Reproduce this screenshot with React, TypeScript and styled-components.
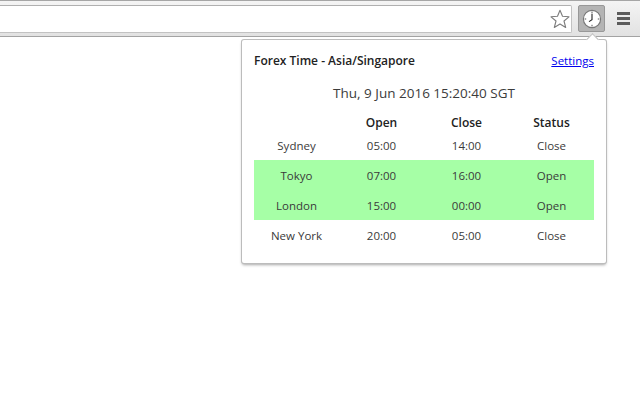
import React from 'react';
import styled, { createGlobalStyle } from 'styled-components';

const rows = [
    { city: 'Sydney', open: '05:00', close: '14:00', status: 'Close' },
    { city: 'Tokyo', open: '07:00', close: '16:00', status: 'Open' },
    { city: 'London', open: '15:00', close: '00:00', status: 'Open' },
    { city: 'New York', open: '20:00', close: '05:00', status: 'Close' },
];

const App = () => {
    return (
        <Page>
            <Global />
            <Toolbar>
                <Omnibox>
                    <StarIcon />
                </Omnibox>
                <ExtButton>
                    <ClockIcon />
                </ExtButton>
                <Menu>
                    <MenuBar />
                    <MenuBar />
                    <MenuBar />
                </Menu>
            </Toolbar>
            <Popup>
                <Arrow />
                <Header>
                    <Title>Forex Time - Asia/Singapore</Title>
                    <SettingsLink href="#">Settings</SettingsLink>
                </Header>
                <DateLine>Thu, 9 Jun 2016 15:20:40 SGT</DateLine>
                <HeadRow>
                    <Cell />
                    <Cell>Open</Cell>
                    <Cell>Close</Cell>
                    <Cell>Status</Cell>
                </HeadRow>
                {rows.map((r) => (
                    <Row key={r.city} $active={r.status === 'Open'}>
                        <Cell>{r.city}</Cell>
                        <Cell>{r.open}</Cell>
                        <Cell>{r.close}</Cell>
                        <Cell>{r.status}</Cell>
                    </Row>
                ))}
            </Popup>
        </Page>
    );
};

const StarIcon = () => (
    <svg width="20" height="20" viewBox="0 0 20 20">
        <path
            d="M10 1.2 L12.5 7.3 L19 7.8 L14 12 L15.7 18.5 L10 15 L4.3 18.5 L6 12 L1 7.8 L7.5 7.3 Z"
            fill="#fff"
            stroke="#7d7d7d"
            strokeWidth="1.1"
            strokeLinejoin="round"
        />
    </svg>
);

const ClockIcon = () => (
    <svg width="20" height="20" viewBox="0 0 20 20">
        <circle cx="10" cy="10" r="8.6" fill="#fff" stroke="#777" strokeWidth="1.1" />
        <path d="M10 2.6V4.2M10 15.8V17.4M2.6 10H4.2M15.8 10H17.4" stroke="#555" strokeWidth="1" />
        <path d="M10 4.8V10.6L7 12.6" fill="none" stroke="#222" strokeWidth="1.1" />
    </svg>
);

export default App;

const Global = createGlobalStyle`
    html, body {
        margin: 0;
        padding: 0;
        background: #fff;
        width: 640px;
        height: 400px;
        overflow: hidden;
    }
`;

const Page = styled.div`
    position: relative;
    width: 640px;
    height: 400px;
    font-family: 'Open Sans', 'Noto Sans', 'Liberation Sans', sans-serif;
    color: #333;
`;

const Toolbar = styled.div`
    box-sizing: border-box;
    height: 37px;
    display: flex;
    align-items: flex-start;
    padding-top: 4px;
    background: linear-gradient(#f4f4f4, #e2e2e2);
    border-top: 1px solid #a6a6a6;
    border-bottom: 1px solid #a3a3a3;
`;

const Omnibox = styled.div`
    box-sizing: border-box;
    flex: none;
    width: 575px;
    height: 28px;
    margin-left: -3px;
    display: flex;
    align-items: center;
    justify-content: flex-end;
    padding-right: 1px;
    background: #fff;
    border: 1px solid #c2c2c2;
    border-top-color: #b0b0b0;
    border-radius: 2px;
`;

const ExtButton = styled.div`
    box-sizing: border-box;
    flex: none;
    width: 27px;
    height: 27px;
    margin-left: 6px;
    display: flex;
    align-items: center;
    justify-content: center;
    background: #b4b4b4;
    border: 1px solid #989898;
    border-radius: 2px;
`;

const Menu = styled.div`
    flex: none;
    margin-left: 12px;
    margin-top: 7px;
    display: flex;
    flex-direction: column;
    gap: 2px;
`;

const MenuBar = styled.div`
    width: 13px;
    height: 3px;
    background: #5c5c5c;
`;

const Popup = styled.div`
    position: absolute;
    left: 242px;
    top: 40px;
    box-sizing: border-box;
    width: 364px;
    height: 223px;
    padding: 12px;
    background: #fff;
    border-radius: 2px;
    box-shadow: 0 0 0 1px #bcbcbc, 0 2px 3px rgba(0, 0, 0, 0.35);
`;

const Arrow = styled.div`
    position: absolute;
    top: -5px;
    left: 346px;
    width: 8px;
    height: 8px;
    background: #fff;
    border-left: 1px solid #bcbcbc;
    border-top: 1px solid #bcbcbc;
    transform: rotate(45deg);
`;

const Header = styled.div`
    display: flex;
    justify-content: space-between;
    align-items: center;
    height: 17px;
`;

const Title = styled.div`
    font-size: 12px;
    font-weight: 600;
    color: #222;
`;

const SettingsLink = styled.a`
    font-size: 11.5px;
    color: #0000ee;
    text-decoration: underline;
`;

const DateLine = styled.div`
    margin-top: 14px;
    height: 20px;
    line-height: 20px;
    text-align: center;
    font-size: 13.5px;
    color: #3c3c3c;
`;

const HeadRow = styled.div`
    display: grid;
    grid-template-columns: repeat(4, 85px);
    align-items: center;
    text-align: center;
    height: 24px;
    margin-top: 7px;
    font-size: 12px;
    font-weight: 600;
    color: #222;
`;

const Row = styled.div<{ $active: boolean }>`
    display: grid;
    grid-template-columns: repeat(4, 85px);
    align-items: center;
    text-align: center;
    height: 30px;
    font-size: 11.5px;
    color: #3a3a3a;
    background: ${(props) => (props.$active ? '#a6ffa6' : 'transparent')};

    &:nth-child(5) {
        height: 26px;
        padding-bottom: 4px;
        box-sizing: border-box;
    }
`;

const Cell = styled.div``;
